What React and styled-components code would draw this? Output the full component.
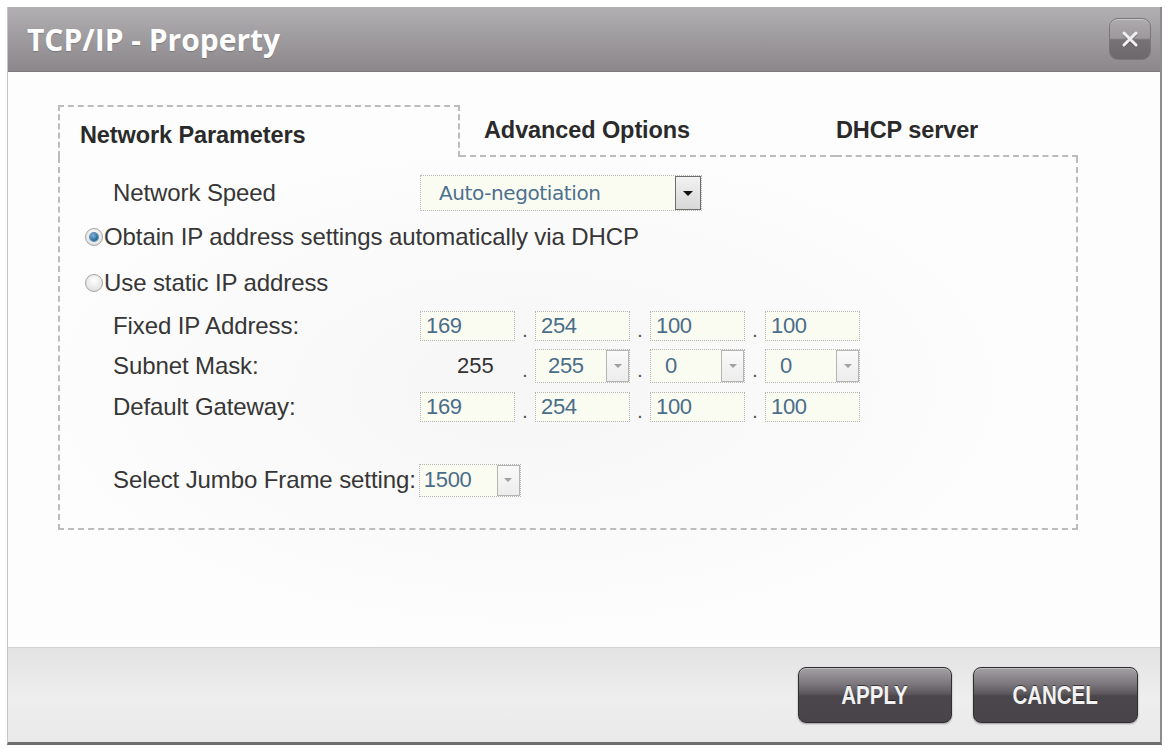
import React from "react";
import styled, { createGlobalStyle } from "styled-components";

const Global = createGlobalStyle`
  html, body { margin: 0; padding: 0; background: #ffffff; }
  body { font-family: "Liberation Sans", Arial, sans-serif; }
  * { box-sizing: border-box; }
`;

const Page = styled.div`
  width: 1168px;
  height: 748px;
  padding: 7px 6px 3px 7px;
  background: #ffffff;
`;

const Dialog = styled.div`
  width: 1155px;
  height: 738px;
  display: flex;
  flex-direction: column;
  border-left: 1px solid #c6c6c6;
  border-right: 2px solid #8c8a8c;
  border-bottom: 3px solid #6e6c6e;
  background: #fdfdfd;
`;

const TitleBar = styled.div`
  height: 65px;
  flex: none;
  display: flex;
  align-items: center;
  justify-content: space-between;
  padding: 0 9px 0 19px;
  background: linear-gradient(to bottom, #b3b0b3 0%, #a29fa2 40%, #8b878b 100%);
  border-bottom: 1px solid #7c787c;
`;

const Title = styled.h1`
  margin: 0;
  font-family: "Open Sans", "Liberation Sans", sans-serif;
  font-weight: 700;
  font-size: 30px;
  letter-spacing: 0px;
  color: #ffffff;
  text-shadow: 0 1px 1px rgba(0, 0, 0, 0.2);
`;

const CloseButton = styled.button`
  width: 42px;
  height: 42px;
  padding: 0;
  display: flex;
  align-items: center;
  justify-content: center;
  border: 1px solid #7a777a;
  border-radius: 9px;
  background: linear-gradient(to bottom, #aeabae 0%, #9c989c 48%, #767276 52%, #6c686c 100%);
  box-shadow: inset 0 1px 0 rgba(255, 255, 255, 0.35);
  cursor: pointer;
`;

const Body = styled.div`
  flex: 1;
  padding: 33px 0 0 50px;
  background: radial-gradient(ellipse at 45% 55%, #f6f6f6 0%, #fdfdfd 60%);
`;

const TabStrip = styled.div`
  width: 1020px;
  height: 52px;
  display: flex;
`;

const dash = "2px dashed #bcbcbc";

const Tab = styled.div`
  height: 100%;
  display: flex;
  align-items: center;
  padding-left: ${(p) => p.$pad}px;
  width: ${(p) => (p.$w ? `${p.$w}px` : "auto")};
  flex: ${(p) => (p.$w ? "none" : "1")};
  font-weight: 700;
  font-size: 23.5px;
  color: #2a2a2a;
  letter-spacing: -0.1px;
  border-top: ${(p) => (p.$active ? dash : "none")};
  border-left: ${(p) => (p.$active ? dash : "none")};
  border-right: ${(p) => (p.$active ? dash : "none")};
  border-bottom: ${(p) => (p.$active ? "none" : dash)};
  padding-top: ${(p) => (p.$active ? 6 : 0)}px;
`;

const Panel = styled.div`
  width: 1020px;
  height: 373px;
  border-left: ${dash};
  border-right: ${dash};
  border-bottom: ${dash};
  padding-top: 16px;
  display: flex;
  flex-direction: column;
`;

const Row = styled.div`
  height: 40px;
  margin-top: ${(p) => p.$mt || 0}px;
  display: flex;
  align-items: center;
  padding-left: ${(p) => (p.$radio ? 25 : 53)}px;
`;

const Label = styled.span`
  width: ${(p) => (p.$auto ? "auto" : "307px")};
  margin-right: ${(p) => (p.$auto ? 3 : 0)}px;
  font-size: 24px;
  color: #363636;
  letter-spacing: -0.1px;
  white-space: nowrap;
`;

const RadioLabel = styled.label`
  display: flex;
  align-items: center;
  gap: 1px;
  font-size: 24px;
  color: #363636;
  letter-spacing: -0.1px;
  white-space: nowrap;
`;

const RadioDot = styled.span`
  width: 18px;
  height: 18px;
  border-radius: 50%;
  border: 1px solid #a3a3a3;
  background: radial-gradient(circle at 50% 35%, #ffffff 0%, #e4e4e4 70%, #cfcfcf 100%);
  display: flex;
  align-items: center;
  justify-content: center;
  &::after {
    content: "";
    width: 8px;
    height: 8px;
    border-radius: 50%;
    display: ${(p) => (p.$checked ? "block" : "none")};
    background: radial-gradient(circle at 40% 35%, #7fb3d8 0%, #1f5f8f 75%);
    box-shadow: 0 0 0 1px #5a8cb0;
  }
`;

const Field = styled.div`
  width: ${(p) => p.$w || 95}px;
  height: ${(p) => p.$h || 30}px;
  display: flex;
  align-items: center;
  justify-content: space-between;
  padding-left: ${(p) => p.$pl || 5}px;
  border: 1px dotted #b4b4b4;
  background: #fbfcf1;
  font-size: ${(p) => p.$fs || 22}px;
  color: #4a6d8a;
  letter-spacing: -0.3px;
`;

const PlainValue = styled.div`
  width: 95px;
  padding-left: 37px;
  font-size: 22px;
  color: #333;
`;

const Dot = styled.span`
  width: 20px;
  text-align: center;
  font-size: 21px;
  color: #555;
  line-height: 1;
  padding-top: 6px;
`;

const ArrowBox = styled.span`
  width: ${(p) => (p.$dark ? 26 : 23)}px;
  height: 100%;
  flex: none;
  display: flex;
  align-items: center;
  justify-content: center;
  border: 1px solid ${(p) => (p.$dark ? "#6e6e6e" : "#b5b5b5")};
  background: ${(p) =>
    p.$dark
      ? "linear-gradient(to bottom, #f2f2f2, #d7d7d7)"
      : "linear-gradient(to bottom, #fafafa, #ececec)"};
  &::after {
    content: "";
    width: 0;
    height: 0;
    border-left: ${(p) => (p.$dark ? 5 : 4)}px solid transparent;
    border-right: ${(p) => (p.$dark ? 5 : 4)}px solid transparent;
    border-top: ${(p) => (p.$dark ? 5 : 4)}px solid ${(p) => (p.$dark ? "#111" : "#a0a0a0")};
  }
`;

const SpeedText = styled.span`
  font-family: "DejaVu Sans", "Liberation Sans", sans-serif;
  font-size: 20px;
  letter-spacing: -0.4px;
  color: #4b6f8f;
`;

const Footer = styled.div`
  height: 95px;
  flex: none;
  display: flex;
  justify-content: flex-end;
  align-items: flex-start;
  gap: 21px;
  padding: 19px 22px 0 0;
  border-top: 1px solid #d2d2d2;
  background: linear-gradient(to bottom, #e3e3e3 0%, #eeeeee 55%, #e9e9e9 100%);
`;

const ActionButton = styled.button`
  width: ${(p) => p.$w}px;
  height: 56px;
  padding: 0;
  display: flex;
  align-items: center;
  justify-content: center;
  border: 1px solid #2f2d30;
  border-radius: 8px;
  background: linear-gradient(to bottom, #a4a1a5 0%, #7a767b 30%, #5a565b 48%, #4a464b 52%, #48444a 100%);
  box-shadow: 0 1px 2px rgba(0, 0, 0, 0.35), inset 0 1px 0 rgba(255, 255, 255, 0.3);
  cursor: pointer;
`;

const Caption = styled.span`
  display: inline-block;
  transform: scaleX(0.82);
  color: #f2f2f2;
  font-family: "Liberation Sans", sans-serif;
  font-weight: 700;
  font-size: 25px;
  text-shadow: 0 -1px 0 rgba(0, 0, 0, 0.5);
`;

const IpRow = ({ values }) => (
  <>
    {values.map((v, i) => (
      <React.Fragment key={i}>
        {i > 0 && <Dot>.</Dot>}
        <Field>{v}</Field>
      </React.Fragment>
    ))}
  </>
);

export default function App() {
  return (
    <Page>
      <Global />
      <Dialog>
        <TitleBar>
          <Title>TCP/IP - Property</Title>
          <CloseButton aria-label="Close">
            <svg width="20" height="20" viewBox="0 0 20 20">
              <path d="M4 4 L16 16 M16 4 L4 16" stroke="rgba(0,0,0,0.2)" strokeWidth="3.5" transform="translate(0,1)" />
              <path d="M4 4 L16 16 M16 4 L4 16" stroke="#f0f0f0" strokeWidth="3" strokeLinecap="round" />
            </svg>
          </CloseButton>
        </TitleBar>
        <Body>
          <TabStrip>
            <Tab $active $w={402} $pad={20}>Network Parameters</Tab>
            <Tab $w={376} $pad={24}>Advanced Options</Tab>
            <Tab $pad={0}>DHCP server</Tab>
          </TabStrip>
          <Panel>
            <Row>
              <Label>Network Speed</Label>
              <Field $w={282} $h={36} $pl={18}>
                <SpeedText>Auto-negotiation</SpeedText>
                <ArrowBox $dark />
              </Field>
            </Row>
            <Row $radio $mt={4}>
              <RadioLabel>
                <RadioDot $checked />
                Obtain IP address settings automatically via DHCP
              </RadioLabel>
            </Row>
            <Row $radio $mt={6}>
              <RadioLabel>
                <RadioDot />
                Use static IP address
              </RadioLabel>
            </Row>
            <Row $mt={3}>
              <Label>Fixed IP Address:</Label>
              <IpRow values={["169", "254", "100", "100"]} />
            </Row>
            <Row>
              <Label>Subnet Mask:</Label>
              <PlainValue>255</PlainValue>
              <Dot>.</Dot>
              <Field $h={34} $pl={12}>255<ArrowBox /></Field>
              <Dot>.</Dot>
              <Field $h={34} $pl={14}>0<ArrowBox /></Field>
              <Dot>.</Dot>
              <Field $h={34} $pl={14}>0<ArrowBox /></Field>
            </Row>
            <Row $mt={1}>
              <Label>Default Gateway:</Label>
              <IpRow values={["169", "254", "100", "100"]} />
            </Row>
            <Row $mt={33}>
              <Label $auto>Select Jumbo Frame setting:</Label>
              <Field $w={102} $h={33} $pl={4}>1500<ArrowBox /></Field>
            </Row>
          </Panel>
        </Body>
        <Footer>
          <ActionButton $w={154}><Caption>APPLY</Caption></ActionButton>
          <ActionButton $w={165}><Caption>CANCEL</Caption></ActionButton>
        </Footer>
      </Dialog>
    </Page>
  );
}
